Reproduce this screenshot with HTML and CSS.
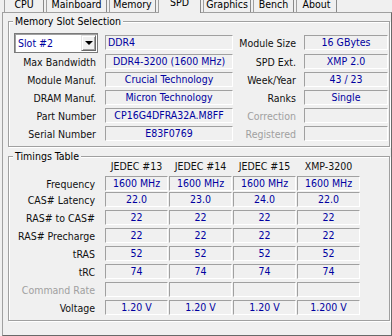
FILE: index.html
```html
<!DOCTYPE html>
<html lang="en">
<head>
<meta charset="utf-8">
<title>CPU-Z SPD</title>
<link rel="stylesheet" href="styles.css">
</head>
<body>
<div class="tabs">
  <div class="tab tab-cpu">CPU</div>
  <div class="tab tab-main">Mainboard</div>
  <div class="tab tab-mem">Memory</div>
  <div class="tab tab-spd active">SPD</div>
  <div class="tab tab-gfx">Graphics</div>
  <div class="tab tab-bench">Bench</div>
  <div class="tab tab-about">About</div>
</div>
<div class="panel">
  <section class="group slot">
    <span class="legend">Memory Slot Selection</span>
    <div class="slot-grid">
      <div class="combo">
        <span class="combo-text">Slot #2</span>
        <span class="combo-btn"><span class="arrow"></span></span>
      </div>
      <div class="field first text-left">DDR4</div>
      <div class="label right first">Module Size</div>
      <div class="field first">16 GBytes</div>

      <div class="label">Max Bandwidth</div>
      <div class="field">DDR4-3200 (1600 MHz)</div>
      <div class="label right">SPD Ext.</div>
      <div class="field">XMP 2.0</div>

      <div class="label">Module Manuf.</div>
      <div class="field">Crucial Technology</div>
      <div class="label right">Week/Year</div>
      <div class="field">43 / 23</div>

      <div class="label">DRAM Manuf.</div>
      <div class="field">Micron Technology</div>
      <div class="label right">Ranks</div>
      <div class="field">Single</div>

      <div class="label">Part Number</div>
      <div class="field">CP16G4DFRA32A.M8FF</div>
      <div class="label right disabled">Correction</div>
      <div class="field"></div>

      <div class="label">Serial Number</div>
      <div class="field">E83F0769</div>
      <div class="label right disabled">Registered</div>
      <div class="field"></div>
    </div>
  </section>

  <section class="group timings">
    <span class="legend">Timings Table</span>
    <div class="timing-grid">
      <div></div>
      <div class="head">JEDEC #13</div>
      <div class="head">JEDEC #14</div>
      <div class="head">JEDEC #15</div>
      <div class="head">XMP-3200</div>

      <div class="label">Frequency</div>
      <div class="field">1600 MHz</div>
      <div class="field">1600 MHz</div>
      <div class="field">1600 MHz</div>
      <div class="field">1600 MHz</div>

      <div class="label">CAS# Latency</div>
      <div class="field">22.0</div>
      <div class="field">23.0</div>
      <div class="field">24.0</div>
      <div class="field">22.0</div>

      <div class="label">RAS# to CAS#</div>
      <div class="field">22</div>
      <div class="field">22</div>
      <div class="field">22</div>
      <div class="field">22</div>

      <div class="label">RAS# Precharge</div>
      <div class="field">22</div>
      <div class="field">22</div>
      <div class="field">22</div>
      <div class="field">22</div>

      <div class="label">tRAS</div>
      <div class="field">52</div>
      <div class="field">52</div>
      <div class="field">52</div>
      <div class="field">52</div>

      <div class="label">tRC</div>
      <div class="field">74</div>
      <div class="field">74</div>
      <div class="field">74</div>
      <div class="field">74</div>

      <div class="label disabled">Command Rate</div>
      <div class="field"></div>
      <div class="field"></div>
      <div class="field"></div>
      <div class="field"></div>

      <div class="label">Voltage</div>
      <div class="field">1.20 V</div>
      <div class="field">1.20 V</div>
      <div class="field">1.20 V</div>
      <div class="field">1.200 V</div>
    </div>
  </section>
</div>
</body>
</html>
```

FILE: styles.css
```css
html, body {
  margin: 0;
  padding: 0;
  overflow: hidden;
  background: #f0f0f0;
}

body {
  width: 392px;
  height: 336px;
  font-family: "DejaVu Sans Condensed", "DejaVu Sans", "Liberation Sans", sans-serif;
  font-stretch: condensed;
  font-size: 10.5px;
  color: #1a1a1a;
}

/* ---------- tabs ---------- */
.tabs {
  display: flex;
  gap: 2px;
  padding-left: 4px;
  height: 12px;
  position: relative;
  z-index: 1;
}

.tab {
  box-sizing: border-box;
  height: 12px;
  background: #f0f0f0;
  border-left: 1px solid #a0a0a0;
  border-right: 1px solid #8a8a8a;
  text-align: center;
  line-height: 9px;
  white-space: nowrap;
  color: #000;
}

.tab.active {
  height: 13px;
  line-height: 5px;
}

.tab-cpu { width: 40px; }
.tab-main { width: 61px; }
.tab-mem { width: 47px; }
.tab-spd { width: 43px; }
.tab-gfx { width: 48px; }
.tab-bench { width: 41px; }
.tab-about { width: 41px; }

/* ---------- panel ---------- */
.panel {
  box-sizing: border-box;
  width: 390px;
  margin-left: 2px;
  border-top: 1px solid #a0a0a0;
  border-left: 1px solid #a0a0a0;
  border-right: 1px solid #696969;
  border-bottom: 1px solid #696969;
  padding: 8px 1px 14px 5px;
}

.group {
  position: relative;
  border: 1px solid #a0a0a0;
  box-shadow: inset 1px 1px 0 #fff, 1px 1px 0 #fff;
  padding: 11px 0 5px 5px;
}

.group.timings {
  margin-top: 9px;
  padding-top: 1px;
}

.legend {
  position: absolute;
  top: -7px;
  left: 4px;
  padding: 0 2px;
  line-height: 12px;
  background: #f0f0f0;
  color: #000;
  white-space: nowrap;
}

/* ---------- shared cells ---------- */
.label {
  height: 15px;
  line-height: 17px;
  padding-right: 9px;
  text-align: right;
  white-space: nowrap;
  color: #111;
}

.label.right {
  padding-right: 8px;
}

.label.disabled {
  color: #a0a0a0;
}

.field {
  box-sizing: border-box;
  height: 15px;
  border: 1px solid;
  border-color: #a0a0a0 #fff #fff #a0a0a0;
  line-height: 13px;
  text-align: center;
  white-space: nowrap;
  overflow: hidden;
  color: #0000a0;
}

.field.text-left {
  text-align: left;
  padding-left: 2px;
}

/* ---------- slot section ---------- */
.slot-grid {
  display: grid;
  grid-template-columns: 91px 128px 71px 84px;
  grid-template-rows: 18px repeat(5, 15px);
  row-gap: 3px;
}

.first {
  margin-top: 2px;
}

.combo {
  box-sizing: border-box;
  width: 84px;
  height: 20px;
  border: 1px solid #7a7a7a;
  box-shadow: inset 1px 1px 0 #a0a0a0;
  background: #fff;
  padding: 1px;
  display: flex;
  align-items: stretch;
}

.combo-text {
  flex: 1;
  padding-left: 2px;
  line-height: 17px;
  color: #0000a0;
  white-space: nowrap;
}

.combo-btn {
  box-sizing: border-box;
  width: 15px;
  background: #f0f0f0;
  border: 1px solid;
  border-color: #e3e3e3 #696969 #696969 #e3e3e3;
  box-shadow: inset 1px 1px 0 #fff, inset -1px -1px 0 #a0a0a0;
  display: flex;
  align-items: center;
  justify-content: center;
}

.arrow {
  width: 0;
  height: 0;
  border-left: 4px solid transparent;
  border-right: 4px solid transparent;
  border-top: 4px solid #000;
}

/* ---------- timings ---------- */
.timing-grid {
  display: grid;
  grid-template-columns: 90px repeat(4, 63px);
  column-gap: 1px;
  grid-template-rows: 15px 13px repeat(7, 15px);
  row-gap: 3px;
}

.head {
  height: 15px;
  line-height: 17px;
  text-align: center;
  white-space: nowrap;
  color: #111;
}
```
